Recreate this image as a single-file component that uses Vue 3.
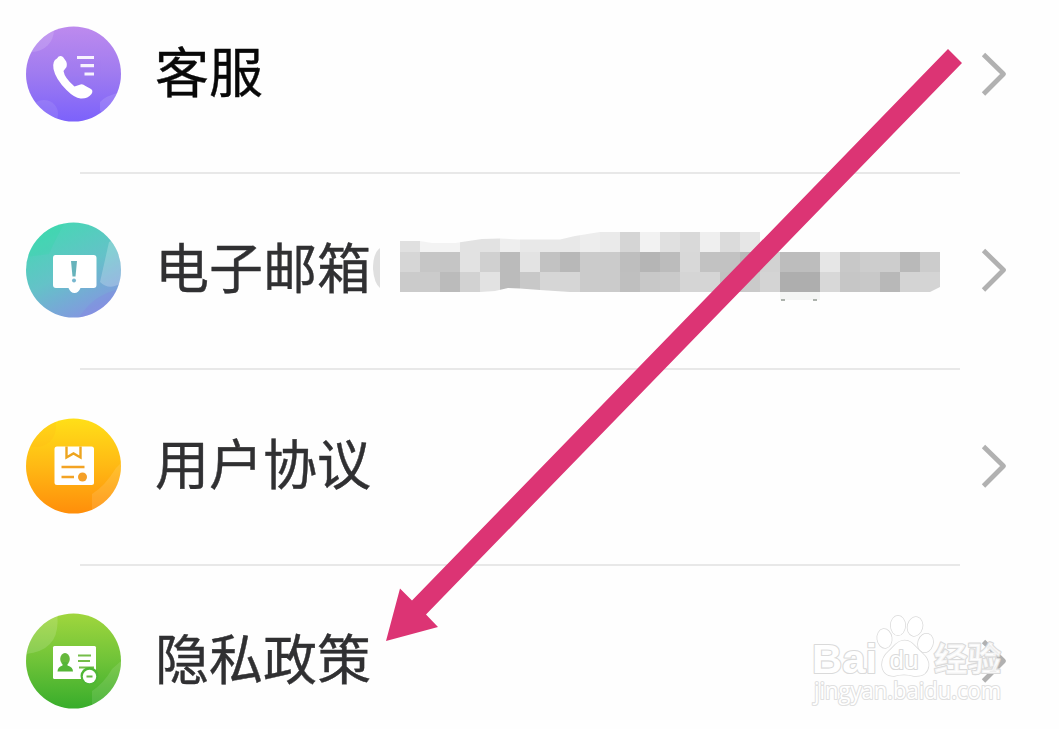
<template>
  <div class="settings-page">
    <div class="menu-list">
      <div v-for="item in menuList" :key="item.id" class="menu-item">
        <svg class="menu-icon" viewBox="0 0 96 96">
          <defs>
            <linearGradient :id="'bg-' + item.id" :x1="item.x1" y1="0" :x2="item.x2" y2="1">
              <stop offset="0" :stop-color="item.colors[0]" />
              <stop offset="0.5" :stop-color="item.colors[1]" />
              <stop offset="1" :stop-color="item.colors[2]" />
            </linearGradient>
            <clipPath :id="'clip-' + item.id"><circle cx="48.5" cy="48" r="47.5" /></clipPath>
          </defs>
          <circle cx="48.5" cy="48" r="47.5" :fill="`url(#bg-${item.id})`" />

          <!-- 客服 -->
          <g v-if="item.id === 'service'" clip-path="url(#clip-service)">
            <circle cx="7" cy="4" r="22" fill="#fff" opacity="0.14" />
            <circle cx="19" cy="88" r="14" fill="#fff" opacity="0.09" />
            <path d="M75 85V76Q80 70 96 66V96Z" fill="#fff" opacity="0.12" />
            <path
              d="M32 32.5Q34.500 28.5 38 31L40.500 34.5Q42.500 37 41.500 41L38.500 45Q39.500 52 49.500 60.500L55.500 58.500Q57.500 57.500 60.500 60L66 63Q68.500 64.500 66.500 68Q62.500 73 55.500 72.500Q49.500 72 41.500 64Q30.500 53 28.500 43Q27 35 32 32.500Z"
              fill="#fff"
            />
            <path d="M52 31.500H69M55.500 39.700H69M59.500 48H69" stroke="#fff" stroke-width="3.200" opacity="0.9" />
          </g>

          <!-- 电子邮箱 -->
          <g v-if="item.id === 'email'" clip-path="url(#clip-email)">
            <path d="M0 0H40Q30 18 24 32L0 35Z" fill="#28dba2" opacity="0.2" />
            <path d="M84 20L75 60Q84 69 96 61V14Z" fill="#fff" opacity="0.22" />
            <path d="M54 96Q68 72 96 67V96Z" fill="#8879e5" opacity="0.2" />
            <path
              d="M30.500 33H68.500Q71.500 33 71.500 36V63Q71.500 66 68.500 66H55.500Q53.500 71 49.500 71Q45.500 71 43.500 66H31Q28 66 28 63V36Q28 33 30.500 33Z"
              fill="#fff"
            />
            <path d="M46 39H52L50.500 54.500H47.500Z" fill="#67b3bb" />
            <circle cx="49" cy="58.500" r="2" fill="#78b7cf" />
          </g>

          <!-- 用户协议 -->
          <g v-if="item.id === 'agreement'" clip-path="url(#clip-agreement)">
            <circle cx="11" cy="9" r="20" fill="#ffad16" opacity="0.16" />
            <path d="M67 96V76Q80 68 91 50L96 45V96Z" fill="#fff" opacity="0.11" />
            <rect x="29.500" y="28.500" width="39.500" height="38.500" rx="2.500" fill="#fff" />
            <path d="M41.500 28.500V39.500L48.500 35.500L55.500 39.500V28.500" fill="none" stroke="#eda51f" stroke-width="2.400" />
            <path d="M36.500 49H59.500M36.500 59H49" stroke="#f3a324" stroke-width="2.500" />
            <circle cx="57.500" cy="59" r="4.500" fill="#f5a027" />
          </g>

          <!-- 隐私政策 -->
          <g v-if="item.id === 'privacy'" clip-path="url(#clip-privacy)">
            <path d="M0 0H32Q37 38 0 41Z" fill="#fff" opacity="0.14" />
            <path d="M67 96V78Q79 70 87 56L96 48V96Z" fill="#fff" opacity="0.11" />
            <rect x="28" y="33" width="43" height="33" rx="1.500" fill="#fff" />
            <ellipse cx="40" cy="46" rx="4.800" ry="6" fill="#66b83c" />
            <path d="M37.500 49H42.500V52.500Q48 54 48 58.500H32.500Q32.500 54 37.500 52.500Z" fill="#55b637" />
            <path d="M53 42.500H66M53 48H65M54 54.500H69" stroke="#75bd49" stroke-width="2" />
            <circle cx="64.500" cy="63" r="9" fill="#4fb736" />
            <circle cx="64.500" cy="63.500" r="6.700" fill="#fff" />
            <path d="M61.500 63.500H67.500" stroke="#65b845" stroke-width="2" />
          </g>
        </svg>

        <div class="menu-name" :class="{ dark: item.id === 'service' }">{{ item.name }}</div>

        <svg v-if="item.id === 'email'" class="mosaic" viewBox="370 230 580 80">
          <defs>
            <clipPath id="mosaic-clip">
              <path
                d="M400 241L420 241L432 243H455L482 239L500 238.500L520 239.500H560L575 236L600 232H760V251H940V287L930 292H570L540 290L520 288.500L508 288L495 291L480 292H400Z"
              />
            </clipPath>
          </defs>
          <path d="M380 248Q373 253 373 269Q374 283 380 288Z" fill="#dfdfdf" />
          <g clip-path="url(#mosaic-clip)" shape-rendering="crispEdges">
            <template v-for="(row, r) in mosaicRows" :key="r">
              <rect
                v-for="(color, c) in row"
                :key="c"
                :x="400 + c * 20"
                :y="[231, 252, 272][r]"
                width="20"
                height="21"
                :fill="'#' + color + color + color"
              />
            </template>
          </g>
          <rect x="780" y="292" width="40" height="8" fill="#f4f5f4" />
          <path d="M781 300H785M813 300H817" stroke="#929b92" stroke-width="1.500" />
        </svg>

        <svg class="menu-arrow" viewBox="0 0 28 48">
          <path d="M3.500 4.500L23.500 24L3.500 44" fill="none" stroke="#b1b1b1" stroke-width="4.800" stroke-linejoin="round" />
        </svg>
      </div>
    </div>

    <svg class="pointer" viewBox="0 0 1059 729">
      <path d="M386 641L400 588.500L412 600.500L948 49L962 63L426 614.500L438 627Z" fill="#dc3474" />
    </svg>

    <!-- 水印 -->
    <svg class="watermark" viewBox="800 600 230 120">
      <g fill="#fff" stroke="#dadada" stroke-width="2.200" stroke-linejoin="round" paint-order="stroke">
        <text class="logo" x="812" y="673" font-size="41" textLength="65" lengthAdjust="spacingAndGlyphs">Bai</text>
        <g stroke-width="1.500">
          <ellipse cx="884.500" cy="638.500" rx="7.200" ry="9.500" transform="rotate(-8 884.500 638.500)" />
          <ellipse cx="898" cy="625.500" rx="7.200" ry="9.800" />
          <ellipse cx="915" cy="626.500" rx="7.400" ry="9.500" transform="rotate(14 915 626.500)" />
          <ellipse cx="925.500" cy="643" rx="7.400" ry="9.500" transform="rotate(18 925.500 643)" />
          <path d="M904.500 640.500C897 640.500 894 647 889 651Q882 657 882 665Q883 676 894 676Q904 673 914 676Q927 677 928.500 666Q929 659 922 653C915 647 912 640.500 904.500 640.500Z" />
        </g>
        <text class="du" x="889.500" y="669" font-size="26" textLength="29" lengthAdjust="spacingAndGlyphs">du</text>
        <text class="jingyan" x="934" y="671" font-size="33" textLength="67" lengthAdjust="spacingAndGlyphs" fill-opacity="0.8">经验</text>
        <text class="url" x="814" y="699" font-size="24" textLength="187" lengthAdjust="spacingAndGlyphs" stroke="#e0e0e0">jingyan.baidu.com</text>
      </g>
    </svg>
  </div>
</template>

<script setup>
import { ref } from 'vue';

// 菜单数据
const menuList = ref([
  { id: 'service', name: '客服', x1: 0.5, x2: 0.5, colors: ['#bd8aee', '#9f7bf0', '#7c62fb'] },
  { id: 'email', name: '电子邮箱', x1: 0.25, x2: 0.75, colors: ['#45d8b3', '#64c2c8', '#8792e3'] },
  { id: 'agreement', name: '用户协议', x1: 0.5, x2: 0.5, colors: ['#ffdf18', '#ffb914', '#ff8e0a'] },
  { id: 'privacy', name: '隐私政策', x1: 0.5, x2: 0.5, colors: ['#a0d63d', '#6fc338', '#38ad2b'] },
]);

// 马赛克每一格的灰度
const mosaicRows = [
  'e0 f3 f3 e2 e2 ee e8 e8 e8 ed ea d5 f2 e0 d9 ef db e6'.split(' '),
  'd6 c6 c5 e2 d0 bb e3 c2 b8 cb cb be b5 bc d8 c2 c2 b9 d2 bd bd e6 c8 cd cd b9 cc'.split(' '),
  'cb cb bb d2 e2 bb c8 d6 d6 cb cb bf c8 ca d5 d5 c1 ca d4 ae ae d8 c6 c8 b8 d4 d4'.split(' '),
];
</script>

<style>
body {
  background: #fefefe;
}
</style>

<style scoped>
.settings-page {
  position: relative;
  box-sizing: border-box;
  width: 1059px;
  height: 729px;
  padding-top: 26px;
  overflow: hidden;
  background: #fefefe;
  font-family: "Liberation Sans", "Noto Sans CJK SC", sans-serif;
}

.menu-item {
  position: relative;
  display: flex;
  align-items: center;
  height: 96px;
  margin-bottom: 99.8px;
  padding: 0 51px 0 25px;
}

/* 分割线 */
.menu-item:not(:last-child)::after {
  content: '';
  position: absolute;
  left: 80px;
  right: 99px;
  bottom: -52px;
  height: 2px;
  background: #e8e8e8;
}

.menu-icon {
  flex: none;
  width: 96px;
  height: 96px;
}

.menu-name {
  flex: none;
  width: 216px;
  margin-left: 34px;
  padding-bottom: 8px;
  font-family: "Noto Sans CJK SC", sans-serif;
  font-size: 54px;
  line-height: 88px;
  color: #303032;
  -webkit-text-stroke: 0.4px currentColor;
  white-space: nowrap;
}

.menu-name.dark {
  color: #080808;
}

.mosaic {
  flex: none;
  width: 580px;
  height: 80px;
  margin-left: -1px;
}

.menu-arrow {
  flex: none;
  width: 28px;
  height: 48px;
  margin-left: auto;
}

.pointer {
  position: absolute;
  left: 0;
  top: 0;
  width: 1059px;
  height: 729px;
}

.watermark {
  position: absolute;
  right: 29px;
  bottom: 9px;
  width: 230px;
  height: 120px;
}

.logo {
  font-family: "Liberation Sans", sans-serif;
  font-weight: bold;
}

.du {
  font-family: "Liberation Sans", sans-serif;
}

.jingyan {
  font-family: "Noto Sans CJK SC", sans-serif;
  font-weight: bold;
}

.url {
  font-family: "Open Sans", sans-serif;
}
</style>
